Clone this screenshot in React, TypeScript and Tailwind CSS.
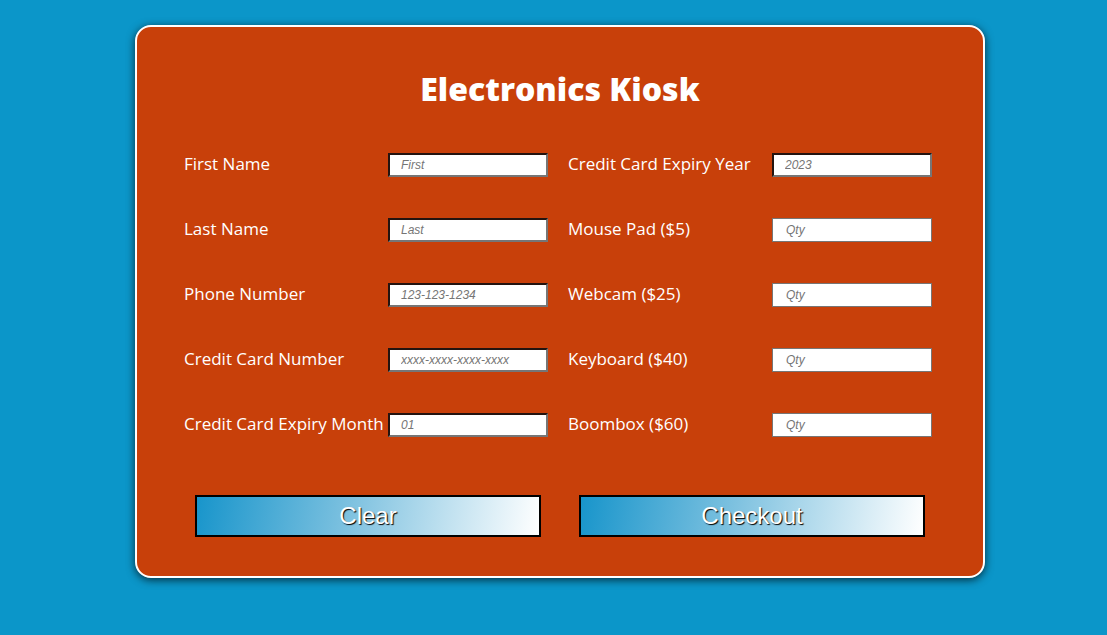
import React from "react";

const leftRows = [
  { label: "First Name", ph: "First", inset: true },
  { label: "Last Name", ph: "Last", inset: true },
  { label: "Phone Number", ph: "123-123-1234", inset: true },
  { label: "Credit Card Number", ph: "xxxx-xxxx-xxxx-xxxx", inset: true },
  { label: "Credit Card Expiry Month", ph: "01", inset: true },
];
const rightRows = [
  { label: "Credit Card Expiry Year", ph: "2023", inset: true },
  { label: "Mouse Pad ($5)", ph: "Qty", inset: false },
  { label: "Webcam ($25)", ph: "Qty", inset: false },
  { label: "Keyboard ($40)", ph: "Qty", inset: false },
  { label: "Boombox ($60)", ph: "Qty", inset: false },
];

function Field({ label, ph, inset }: { label: string; ph: string; inset: boolean }) {
  return (
    <div className="flex items-center h-[24px]">
      <label className="w-[204px] shrink-0 text-white text-[17px] leading-[24px] font-medium font-['Open_Sans',sans-serif] whitespace-nowrap -mt-[2px]">
        {label}
      </label>
      <input
        placeholder={ph}
        className={
          inset
            ? "w-[160px] h-[24px] bg-white border-2 border-t-[#241410] border-l-[#241410] border-b-[#767676] border-r-[#767676] pl-[11px] text-[12px] italic font-['Liberation_Sans',Arial,sans-serif] placeholder:text-[#757575] outline-none"
            : "w-[160px] h-[24px] bg-white border border-[#767676] pl-[13px] text-[12px] italic font-['Liberation_Sans',Arial,sans-serif] placeholder:text-[#757575] outline-none"
        }
      />
    </div>
  );
}

export default function App() {
  return (
    <div className="min-h-[635px] w-full bg-[#0b96c9] pt-[25px] pb-[20px]">
      <div className="ml-[135px] w-[850px] h-[553px] rounded-[16px] border-2 border-white bg-[#c8400a] shadow-[0_2px_8px_rgba(0,0,0,0.7)] flex flex-col items-center">
        <h1 className="mt-[42px] text-white text-[32px] leading-[40px] font-extrabold font-['Open_Sans',sans-serif]">
          Electronics Kiosk
        </h1>
        <div className="mt-[44px] self-start ml-[47px] grid grid-cols-2 gap-x-[20px] gap-y-[41px]">
          {leftRows.map((l, i) => (
            <React.Fragment key={i}>
              <Field {...l} />
              <Field {...rightRows[i]} />
            </React.Fragment>
          ))}
        </div>
        <div className="mt-[58px] flex gap-[38px]">
          {["Clear", "Checkout"].map((t) => (
            <button
              key={t}
              className="w-[346px] h-[42px] border-2 border-black bg-[linear-gradient(100deg,#1895cb_0%,#7fc2e0_45%,#ffffff_100%)] text-white text-[24px] leading-none font-['Liberation_Sans',Arial,sans-serif] [text-shadow:1px_1px_1px_#000]"
            >
              {t}
            </button>
          ))}
        </div>
      </div>
    </div>
  );
}
